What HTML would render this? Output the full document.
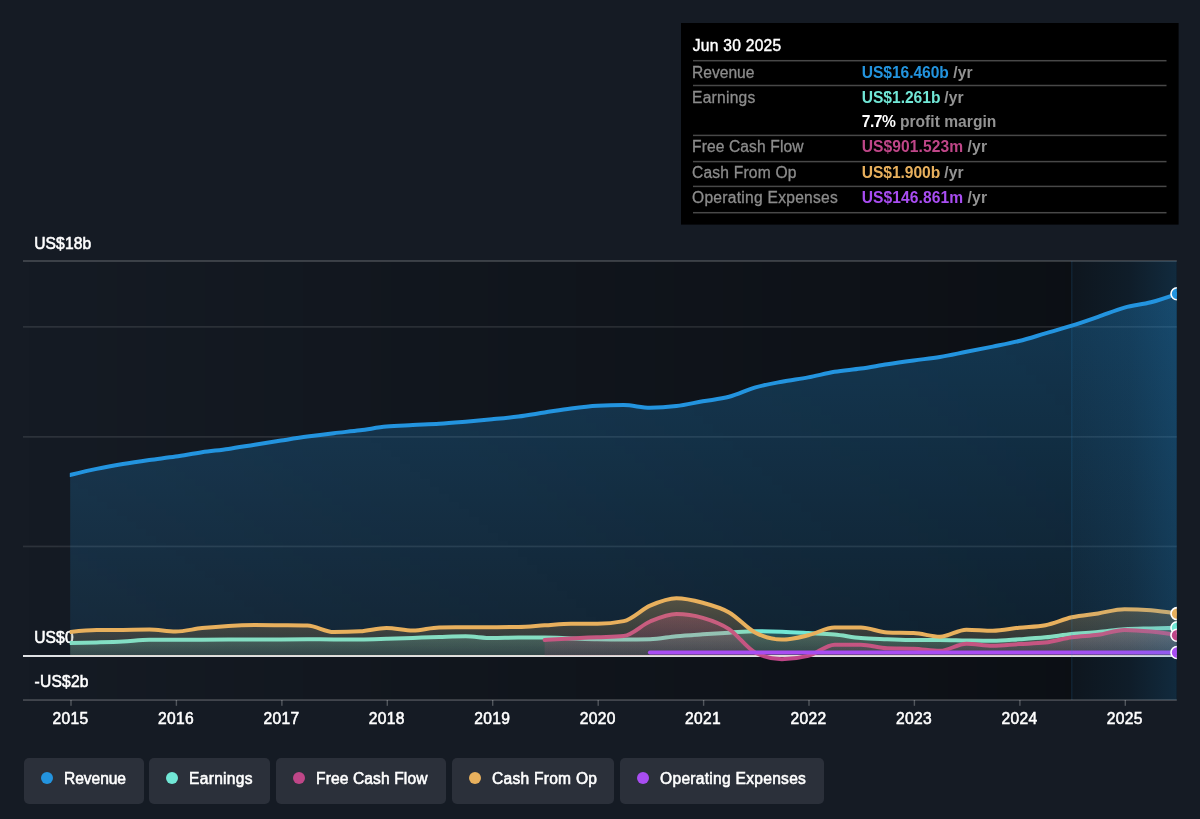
<!DOCTYPE html>
<html lang="en"><head><meta charset="utf-8"><title>Earnings and Revenue History</title>
<style>
html,body{margin:0;padding:0;}
body{width:1200px;height:819px;background:#151b24;overflow:hidden;position:relative;font-family:"Liberation Sans",sans-serif;}
svg.chart{position:absolute;left:0;top:0;will-change:transform;}
.ax{font-family:"Liberation Sans",sans-serif;font-size:15.6px;fill:#fff;font-weight:400;stroke:#fff;stroke-width:0.55px;}
.tx{font-family:"Liberation Sans",sans-serif;font-size:15.6px;}
.tw{fill:#fff;stroke:#fff;stroke-width:0.4px;}
.tk{fill:#8c8c8c;stroke:#8c8c8c;stroke-width:0.3px;}
.tv{font-weight:700;}
.tu{font-weight:700;fill:#939393;}
.lb{will-change:transform;position:absolute;top:757.5px;height:46.4px;background:#2b303a;border-radius:5px;box-sizing:border-box;}
.dot{position:absolute;left:17.2px;top:14.4px;width:12px;height:12px;border-radius:50%;}
.lt{position:absolute;left:40.1px;top:0;line-height:42px;font-size:15.6px;color:#fff;white-space:nowrap;-webkit-text-stroke:0.55px #fff;}
</style></head><body>
<svg class="chart" width="1200" height="819" viewBox="0 0 1200 819">
<defs>
<linearGradient id="bgd" x1="0" x2="1" y1="0" y2="0"><stop offset="0" stop-color="#000" stop-opacity="0"/><stop offset="1" stop-color="#000" stop-opacity="0.42"/></linearGradient>
<linearGradient id="hl" x1="0" x2="1" y1="0" y2="0"><stop offset="0" stop-color="#2394df" stop-opacity="0.035"/><stop offset="0.55" stop-color="#2394df" stop-opacity="0.09"/><stop offset="1" stop-color="#2394df" stop-opacity="0.195"/></linearGradient>
<linearGradient id="grev" x1="0" x2="0" y1="0" y2="1"><stop offset="0" stop-color="#2394df" stop-opacity="0.30"/><stop offset="1" stop-color="#2394df" stop-opacity="0.12"/></linearGradient>
<linearGradient id="gear" gradientUnits="userSpaceOnUse" x1="0" x2="0" y1="627" y2="656"><stop offset="0" stop-color="#71e7d6" stop-opacity="0.30"/><stop offset="1" stop-color="#71e7d6" stop-opacity="0.10"/></linearGradient>
<linearGradient id="gfcf" gradientUnits="userSpaceOnUse" x1="0" x2="0" y1="614" y2="659"><stop offset="0" stop-color="#bf4688" stop-opacity="0.30"/><stop offset="1" stop-color="#bf4688" stop-opacity="0.10"/></linearGradient>
<linearGradient id="gcfo" gradientUnits="userSpaceOnUse" x1="0" x2="0" y1="598" y2="656"><stop offset="0" stop-color="#e8b05d" stop-opacity="0.31"/><stop offset="1" stop-color="#e8b05d" stop-opacity="0.10"/></linearGradient>
<clipPath id="cp"><rect x="23" y="255" width="1153.8" height="450"/></clipPath>
<clipPath id="cps"><rect x="69.8" y="255" width="1107" height="450"/></clipPath>
</defs>
<rect x="24" y="261" width="1047" height="439" fill="url(#bgd)"/>
<rect x="1071" y="261" width="105.8" height="439" fill="#0d1117"/>
<rect x="23" y="260" width="1153.8" height="2" fill="#fff" fill-opacity="0.17"/>
<rect x="23" y="326.0" width="1153.8" height="1.7" fill="#fff" fill-opacity="0.10"/>
<rect x="23" y="436.0" width="1153.8" height="1.7" fill="#fff" fill-opacity="0.10"/>
<rect x="23" y="545.6" width="1153.8" height="1.7" fill="#fff" fill-opacity="0.10"/>
<text id="a18" x="34.2" y="248.6" class="ax" style="letter-spacing:0.122px">US$18b</text>
<text id="a0" x="34.2" y="643.4" class="ax" style="letter-spacing:0.122px">US$0</text>
<text id="am2" x="34.6" y="687.3" class="ax" style="letter-spacing:0.198px">-US$2b</text>
<g clip-path="url(#cp)">
<path d="M70.2,475.0C79.0,472.87 87.8,470.73 96.6,468.9C105.3,467.07 114.1,465.48 122.9,464.0C131.7,462.52 140.5,461.25 149.3,460.0C158.1,458.75 166.8,457.80 175.6,456.5C184.4,455.20 193.2,453.47 202.0,452.2C210.8,450.93 219.6,450.15 228.3,448.9C237.1,447.65 245.9,446.08 254.7,444.7C263.5,443.32 272.3,441.95 281.1,440.6C289.8,439.25 298.6,437.83 307.4,436.6C316.2,435.37 325.0,434.25 333.8,433.2C342.6,432.15 351.3,431.40 360.1,430.3C368.9,429.20 377.7,427.47 386.5,426.6C395.3,425.73 404.1,425.57 412.8,425.1C421.6,424.63 430.4,424.37 439.2,423.8C448.0,423.23 456.8,422.45 465.6,421.7C474.3,420.95 483.1,420.17 491.9,419.3C500.7,418.43 509.5,417.63 518.3,416.5C527.1,415.37 535.8,413.83 544.6,412.5C553.4,411.17 562.2,409.62 571.0,408.5C579.8,407.38 588.6,406.27 597.4,405.8C606.1,405.33 614.9,405.10 623.7,405.1C632.5,405.10 641.3,407.80 650.1,407.8C658.9,407.80 667.6,407.18 676.4,406.1C685.2,405.02 694.0,402.85 702.8,401.3C711.6,399.75 720.4,399.12 729.1,396.8C737.9,394.48 746.7,389.92 755.5,387.4C764.3,384.88 773.1,383.37 781.9,381.7C790.6,380.03 799.4,379.05 808.2,377.4C817.0,375.75 825.8,373.27 834.6,371.8C843.4,370.33 852.1,369.87 860.9,368.6C869.7,367.33 878.5,365.57 887.3,364.2C896.1,362.83 904.9,361.60 913.6,360.4C922.4,359.20 931.2,358.43 940.0,357.0C948.8,355.57 957.6,353.53 966.4,351.8C975.1,350.07 983.9,348.40 992.7,346.6C1001.5,344.80 1010.3,343.20 1019.1,341.0C1027.9,338.80 1036.6,335.95 1045.4,333.4C1054.2,330.85 1063.0,328.47 1071.8,325.7C1080.6,322.93 1089.4,319.82 1098.1,316.8C1106.9,313.78 1115.7,310.02 1124.5,307.6C1133.3,305.18 1142.1,304.60 1150.9,302.3C1159.6,300.00 1168.4,296.90 1177.2,293.8L1177.2,656.0L70.2,656.0Z" fill="url(#grev)" clip-path="url(#cps)"/>
<path d="M70.2,475.0C79.0,472.87 87.8,470.73 96.6,468.9C105.3,467.07 114.1,465.48 122.9,464.0C131.7,462.52 140.5,461.25 149.3,460.0C158.1,458.75 166.8,457.80 175.6,456.5C184.4,455.20 193.2,453.47 202.0,452.2C210.8,450.93 219.6,450.15 228.3,448.9C237.1,447.65 245.9,446.08 254.7,444.7C263.5,443.32 272.3,441.95 281.1,440.6C289.8,439.25 298.6,437.83 307.4,436.6C316.2,435.37 325.0,434.25 333.8,433.2C342.6,432.15 351.3,431.40 360.1,430.3C368.9,429.20 377.7,427.47 386.5,426.6C395.3,425.73 404.1,425.57 412.8,425.1C421.6,424.63 430.4,424.37 439.2,423.8C448.0,423.23 456.8,422.45 465.6,421.7C474.3,420.95 483.1,420.17 491.9,419.3C500.7,418.43 509.5,417.63 518.3,416.5C527.1,415.37 535.8,413.83 544.6,412.5C553.4,411.17 562.2,409.62 571.0,408.5C579.8,407.38 588.6,406.27 597.4,405.8C606.1,405.33 614.9,405.10 623.7,405.1C632.5,405.10 641.3,407.80 650.1,407.8C658.9,407.80 667.6,407.18 676.4,406.1C685.2,405.02 694.0,402.85 702.8,401.3C711.6,399.75 720.4,399.12 729.1,396.8C737.9,394.48 746.7,389.92 755.5,387.4C764.3,384.88 773.1,383.37 781.9,381.7C790.6,380.03 799.4,379.05 808.2,377.4C817.0,375.75 825.8,373.27 834.6,371.8C843.4,370.33 852.1,369.87 860.9,368.6C869.7,367.33 878.5,365.57 887.3,364.2C896.1,362.83 904.9,361.60 913.6,360.4C922.4,359.20 931.2,358.43 940.0,357.0C948.8,355.57 957.6,353.53 966.4,351.8C975.1,350.07 983.9,348.40 992.7,346.6C1001.5,344.80 1010.3,343.20 1019.1,341.0C1027.9,338.80 1036.6,335.95 1045.4,333.4C1054.2,330.85 1063.0,328.47 1071.8,325.7C1080.6,322.93 1089.4,319.82 1098.1,316.8C1106.9,313.78 1115.7,310.02 1124.5,307.6C1133.3,305.18 1142.1,304.60 1150.9,302.3C1159.6,300.00 1168.4,296.90 1177.2,293.8" fill="none" stroke="#2394df" stroke-width="4" stroke-linejoin="round" stroke-linecap="round" clip-path="url(#cps)"/>
<path d="M70.2,643.0C79.0,642.83 87.8,642.65 96.6,642.4C105.3,642.15 114.1,641.93 122.9,641.5C131.7,641.07 140.5,639.80 149.3,639.8C158.1,639.80 166.8,639.80 175.6,639.8C184.4,639.80 193.2,639.73 202.0,639.7C210.8,639.67 219.6,639.63 228.3,639.6C237.1,639.57 245.9,639.53 254.7,639.5C263.5,639.47 272.3,639.43 281.1,639.4C289.8,639.37 298.6,639.30 307.4,639.3C316.2,639.30 325.0,639.40 333.8,639.4C342.6,639.40 351.3,639.40 360.1,639.4C368.9,639.40 377.7,639.05 386.5,638.8C395.3,638.55 404.1,638.20 412.8,637.9C421.6,637.60 430.4,637.27 439.2,637.0C448.0,636.73 456.8,636.30 465.6,636.3C474.3,636.30 483.1,638.00 491.9,638.0C500.7,638.00 509.5,637.60 518.3,637.6C527.1,637.60 535.8,637.60 544.6,637.6C553.4,637.60 562.2,638.13 571.0,638.4C579.8,638.67 588.6,639.02 597.4,639.2C606.1,639.38 614.9,639.50 623.7,639.5C632.5,639.50 641.3,639.40 650.1,639.2C658.9,639.00 667.6,637.02 676.4,636.2C685.2,635.38 694.0,634.88 702.8,634.3C711.6,633.72 720.4,633.22 729.1,632.7C737.9,632.18 746.7,631.20 755.5,631.2C764.3,631.20 773.1,631.48 781.9,631.8C790.6,632.12 799.4,632.63 808.2,633.1C817.0,633.57 825.8,633.77 834.6,634.6C843.4,635.43 852.1,637.37 860.9,638.1C869.7,638.83 878.5,638.88 887.3,639.2C896.1,639.52 904.9,640.00 913.6,640.0C922.4,640.00 931.2,640.00 940.0,640.0C948.8,640.00 957.6,640.37 966.4,640.5C975.1,640.63 983.9,640.80 992.7,640.8C1001.5,640.80 1010.3,639.88 1019.1,639.3C1027.9,638.72 1036.6,638.18 1045.4,637.3C1054.2,636.42 1063.0,634.87 1071.8,634.0C1080.6,633.13 1089.4,632.90 1098.1,632.1C1106.9,631.30 1115.7,629.73 1124.5,629.2C1133.3,628.67 1142.1,628.63 1150.9,628.4C1159.6,628.17 1168.4,627.98 1177.2,627.8L1177.2,656.0L70.2,656.0Z" fill="url(#gear)" clip-path="url(#cps)"/>
<path d="M70.2,643.0C79.0,642.83 87.8,642.65 96.6,642.4C105.3,642.15 114.1,641.93 122.9,641.5C131.7,641.07 140.5,639.80 149.3,639.8C158.1,639.80 166.8,639.80 175.6,639.8C184.4,639.80 193.2,639.73 202.0,639.7C210.8,639.67 219.6,639.63 228.3,639.6C237.1,639.57 245.9,639.53 254.7,639.5C263.5,639.47 272.3,639.43 281.1,639.4C289.8,639.37 298.6,639.30 307.4,639.3C316.2,639.30 325.0,639.40 333.8,639.4C342.6,639.40 351.3,639.40 360.1,639.4C368.9,639.40 377.7,639.05 386.5,638.8C395.3,638.55 404.1,638.20 412.8,637.9C421.6,637.60 430.4,637.27 439.2,637.0C448.0,636.73 456.8,636.30 465.6,636.3C474.3,636.30 483.1,638.00 491.9,638.0C500.7,638.00 509.5,637.60 518.3,637.6C527.1,637.60 535.8,637.60 544.6,637.6C553.4,637.60 562.2,638.13 571.0,638.4C579.8,638.67 588.6,639.02 597.4,639.2C606.1,639.38 614.9,639.50 623.7,639.5C632.5,639.50 641.3,639.40 650.1,639.2C658.9,639.00 667.6,637.02 676.4,636.2C685.2,635.38 694.0,634.88 702.8,634.3C711.6,633.72 720.4,633.22 729.1,632.7C737.9,632.18 746.7,631.20 755.5,631.2C764.3,631.20 773.1,631.48 781.9,631.8C790.6,632.12 799.4,632.63 808.2,633.1C817.0,633.57 825.8,633.77 834.6,634.6C843.4,635.43 852.1,637.37 860.9,638.1C869.7,638.83 878.5,638.88 887.3,639.2C896.1,639.52 904.9,640.00 913.6,640.0C922.4,640.00 931.2,640.00 940.0,640.0C948.8,640.00 957.6,640.37 966.4,640.5C975.1,640.63 983.9,640.80 992.7,640.8C1001.5,640.80 1010.3,639.88 1019.1,639.3C1027.9,638.72 1036.6,638.18 1045.4,637.3C1054.2,636.42 1063.0,634.87 1071.8,634.0C1080.6,633.13 1089.4,632.90 1098.1,632.1C1106.9,631.30 1115.7,629.73 1124.5,629.2C1133.3,628.67 1142.1,628.63 1150.9,628.4C1159.6,628.17 1168.4,627.98 1177.2,627.8" fill="none" stroke="#71e7d6" stroke-width="4" stroke-linejoin="round" stroke-linecap="round" clip-path="url(#cps)"/>
<rect x="23" y="655" width="1153.8" height="2" fill="#dfe1e4"/>
<path d="M544.6,639.9C553.4,639.38 562.2,638.85 571.0,638.4C579.8,637.95 588.6,637.60 597.4,637.2C606.1,636.80 614.9,636.80 623.7,636.0C632.5,635.20 641.3,625.17 650.1,621.5C658.9,617.83 667.6,614.00 676.4,614.0C685.2,614.00 694.0,615.28 702.8,617.8C711.6,620.32 720.4,623.28 729.1,629.1C737.9,634.92 746.7,648.37 755.5,652.7C764.3,657.03 773.1,659.20 781.9,659.2C790.6,659.20 799.4,658.10 808.2,655.9C817.0,653.70 825.8,644.70 834.6,644.7C843.4,644.70 852.1,644.70 860.9,644.7C869.7,644.70 878.5,648.03 887.3,648.3C896.1,648.57 904.9,648.43 913.6,648.7C922.4,648.97 931.2,650.80 940.0,650.8C948.8,650.80 957.6,643.70 966.4,643.7C975.1,643.70 983.9,645.80 992.7,645.8C1001.5,645.80 1010.3,644.63 1019.1,644.1C1027.9,643.57 1036.6,643.60 1045.4,642.6C1054.2,641.60 1063.0,638.60 1071.8,637.3C1080.6,636.00 1089.4,636.02 1098.1,634.8C1106.9,633.58 1115.7,630.00 1124.5,630.0C1133.3,630.00 1142.1,630.73 1150.9,631.6C1159.6,632.47 1168.4,633.83 1177.2,635.2L1177.2,656.0L544.6,656.0Z" fill="url(#gfcf)" clip-path="url(#cps)"/>
<path d="M544.6,639.9C553.4,639.38 562.2,638.85 571.0,638.4C579.8,637.95 588.6,637.60 597.4,637.2C606.1,636.80 614.9,636.80 623.7,636.0C632.5,635.20 641.3,625.17 650.1,621.5C658.9,617.83 667.6,614.00 676.4,614.0C685.2,614.00 694.0,615.28 702.8,617.8C711.6,620.32 720.4,623.28 729.1,629.1C737.9,634.92 746.7,648.37 755.5,652.7C764.3,657.03 773.1,659.20 781.9,659.2C790.6,659.20 799.4,658.10 808.2,655.9C817.0,653.70 825.8,644.70 834.6,644.7C843.4,644.70 852.1,644.70 860.9,644.7C869.7,644.70 878.5,648.03 887.3,648.3C896.1,648.57 904.9,648.43 913.6,648.7C922.4,648.97 931.2,650.80 940.0,650.8C948.8,650.80 957.6,643.70 966.4,643.7C975.1,643.70 983.9,645.80 992.7,645.8C1001.5,645.80 1010.3,644.63 1019.1,644.1C1027.9,643.57 1036.6,643.60 1045.4,642.6C1054.2,641.60 1063.0,638.60 1071.8,637.3C1080.6,636.00 1089.4,636.02 1098.1,634.8C1106.9,633.58 1115.7,630.00 1124.5,630.0C1133.3,630.00 1142.1,630.73 1150.9,631.6C1159.6,632.47 1168.4,633.83 1177.2,635.2" fill="none" stroke="#bf4688" stroke-width="4" stroke-linejoin="round" stroke-linecap="round" clip-path="url(#cps)"/>
<path d="M70.2,632.0C79.0,631.12 87.8,630.23 96.6,630.1C105.3,629.97 114.1,629.98 122.9,629.9C131.7,629.82 140.5,629.60 149.3,629.6C158.1,629.60 166.8,631.50 175.6,631.5C184.4,631.50 193.2,629.03 202.0,628.1C210.8,627.17 219.6,626.40 228.3,625.9C237.1,625.40 245.9,625.10 254.7,625.1C263.5,625.10 272.3,625.22 281.1,625.3C289.8,625.38 298.6,625.40 307.4,625.6C316.2,625.80 325.0,632.10 333.8,632.1C342.6,632.10 351.3,631.83 360.1,631.3C368.9,630.77 377.7,628.00 386.5,628.0C395.3,628.00 404.1,630.50 412.8,630.5C421.6,630.50 430.4,627.47 439.2,627.4C448.0,627.33 456.8,627.33 465.6,627.3C474.3,627.27 483.1,627.27 491.9,627.2C500.7,627.13 509.5,627.10 518.3,626.9C527.1,626.70 535.8,625.83 544.6,625.3C553.4,624.77 562.2,623.70 571.0,623.7C579.8,623.70 588.6,623.70 597.4,623.7C606.1,623.70 614.9,622.83 623.7,621.1C632.5,619.37 641.3,609.50 650.1,605.7C658.9,601.90 667.6,598.30 676.4,598.3C685.2,598.30 694.0,600.45 702.8,602.8C711.6,605.15 720.4,607.42 729.1,612.4C737.9,617.38 746.7,628.17 755.5,632.7C764.3,637.23 773.1,639.60 781.9,639.6C790.6,639.60 799.4,637.32 808.2,635.3C817.0,633.28 825.8,627.50 834.6,627.5C843.4,627.50 852.1,627.50 860.9,627.5C869.7,627.50 878.5,632.17 887.3,632.5C896.1,632.83 904.9,632.67 913.6,633.0C922.4,633.33 931.2,636.70 940.0,636.7C948.8,636.70 957.6,629.70 966.4,629.7C975.1,629.70 983.9,630.80 992.7,630.8C1001.5,630.80 1010.3,628.63 1019.1,627.7C1027.9,626.77 1036.6,626.87 1045.4,625.2C1054.2,623.53 1063.0,619.27 1071.8,617.3C1080.6,615.33 1089.4,614.75 1098.1,613.4C1106.9,612.05 1115.7,609.20 1124.5,609.2C1133.3,609.20 1142.1,609.57 1150.9,610.3C1159.6,611.03 1168.4,612.32 1177.2,613.6L1177.2,656.0L70.2,656.0Z" fill="url(#gcfo)" clip-path="url(#cps)"/>
<path d="M70.2,632.0C79.0,631.12 87.8,630.23 96.6,630.1C105.3,629.97 114.1,629.98 122.9,629.9C131.7,629.82 140.5,629.60 149.3,629.6C158.1,629.60 166.8,631.50 175.6,631.5C184.4,631.50 193.2,629.03 202.0,628.1C210.8,627.17 219.6,626.40 228.3,625.9C237.1,625.40 245.9,625.10 254.7,625.1C263.5,625.10 272.3,625.22 281.1,625.3C289.8,625.38 298.6,625.40 307.4,625.6C316.2,625.80 325.0,632.10 333.8,632.1C342.6,632.10 351.3,631.83 360.1,631.3C368.9,630.77 377.7,628.00 386.5,628.0C395.3,628.00 404.1,630.50 412.8,630.5C421.6,630.50 430.4,627.47 439.2,627.4C448.0,627.33 456.8,627.33 465.6,627.3C474.3,627.27 483.1,627.27 491.9,627.2C500.7,627.13 509.5,627.10 518.3,626.9C527.1,626.70 535.8,625.83 544.6,625.3C553.4,624.77 562.2,623.70 571.0,623.7C579.8,623.70 588.6,623.70 597.4,623.7C606.1,623.70 614.9,622.83 623.7,621.1C632.5,619.37 641.3,609.50 650.1,605.7C658.9,601.90 667.6,598.30 676.4,598.3C685.2,598.30 694.0,600.45 702.8,602.8C711.6,605.15 720.4,607.42 729.1,612.4C737.9,617.38 746.7,628.17 755.5,632.7C764.3,637.23 773.1,639.60 781.9,639.6C790.6,639.60 799.4,637.32 808.2,635.3C817.0,633.28 825.8,627.50 834.6,627.5C843.4,627.50 852.1,627.50 860.9,627.5C869.7,627.50 878.5,632.17 887.3,632.5C896.1,632.83 904.9,632.67 913.6,633.0C922.4,633.33 931.2,636.70 940.0,636.7C948.8,636.70 957.6,629.70 966.4,629.7C975.1,629.70 983.9,630.80 992.7,630.8C1001.5,630.80 1010.3,628.63 1019.1,627.7C1027.9,626.77 1036.6,626.87 1045.4,625.2C1054.2,623.53 1063.0,619.27 1071.8,617.3C1080.6,615.33 1089.4,614.75 1098.1,613.4C1106.9,612.05 1115.7,609.20 1124.5,609.2C1133.3,609.20 1142.1,609.57 1150.9,610.3C1159.6,611.03 1168.4,612.32 1177.2,613.6" fill="none" stroke="#e8b05d" stroke-width="4" stroke-linejoin="round" stroke-linecap="round" clip-path="url(#cps)"/>
<path d="M650,652.5L1177,652.5" stroke="#a94df2" stroke-width="4.2" stroke-linecap="round" fill="none"/>
<rect x="1071" y="261" width="105.8" height="439" fill="url(#hl)"/>
<rect x="1071" y="261" width="1.6" height="439" fill="#2394df" fill-opacity="0.10"/>
<circle cx="1177" cy="293.8" r="6" fill="#2394df" stroke="#fff" stroke-width="1.6"/>
<circle cx="1177" cy="613.6" r="6" fill="#e8b05d" stroke="#fff" stroke-width="1.6"/>
<circle cx="1177" cy="627.8" r="6" fill="#71e7d6" stroke="#fff" stroke-width="1.6"/>
<circle cx="1177" cy="635.2" r="6" fill="#bf4688" stroke="#fff" stroke-width="1.6"/>
<circle cx="1177" cy="652.5" r="6" fill="#a94df2" stroke="#fff" stroke-width="1.6"/>
</g>
<rect x="23" y="699.1" width="1153.8" height="1.9" fill="#fff" fill-opacity="0.19"/>
<rect x="70.3" y="700" width="1.4" height="5.8" fill="#fff" fill-opacity="0.26"/>
<text id="y2015" x="70.5" y="724.2" class="ax" text-anchor="middle" style="letter-spacing:0.337px">2015</text>
<rect x="175.7" y="700" width="1.4" height="5.8" fill="#fff" fill-opacity="0.26"/>
<text id="y2016" x="175.9" y="724.2" class="ax" text-anchor="middle" style="letter-spacing:0.337px">2016</text>
<rect x="281.2" y="700" width="1.4" height="5.8" fill="#fff" fill-opacity="0.26"/>
<text id="y2017" x="281.4" y="724.2" class="ax" text-anchor="middle" style="letter-spacing:0.337px">2017</text>
<rect x="386.6" y="700" width="1.4" height="5.8" fill="#fff" fill-opacity="0.26"/>
<text id="y2018" x="386.8" y="724.2" class="ax" text-anchor="middle" style="letter-spacing:0.337px">2018</text>
<rect x="492.0" y="700" width="1.4" height="5.8" fill="#fff" fill-opacity="0.26"/>
<text id="y2019" x="492.2" y="724.2" class="ax" text-anchor="middle" style="letter-spacing:0.337px">2019</text>
<rect x="597.5" y="700" width="1.4" height="5.8" fill="#fff" fill-opacity="0.26"/>
<text id="y2020" x="597.7" y="724.2" class="ax" text-anchor="middle" style="letter-spacing:0.337px">2020</text>
<rect x="702.9" y="700" width="1.4" height="5.8" fill="#fff" fill-opacity="0.26"/>
<text id="y2021" x="703.1" y="724.2" class="ax" text-anchor="middle" style="letter-spacing:0.337px">2021</text>
<rect x="808.3" y="700" width="1.4" height="5.8" fill="#fff" fill-opacity="0.26"/>
<text id="y2022" x="808.5" y="724.2" class="ax" text-anchor="middle" style="letter-spacing:0.337px">2022</text>
<rect x="913.7" y="700" width="1.4" height="5.8" fill="#fff" fill-opacity="0.26"/>
<text id="y2023" x="913.9" y="724.2" class="ax" text-anchor="middle" style="letter-spacing:0.337px">2023</text>
<rect x="1019.2" y="700" width="1.4" height="5.8" fill="#fff" fill-opacity="0.26"/>
<text id="y2024" x="1019.4" y="724.2" class="ax" text-anchor="middle" style="letter-spacing:0.337px">2024</text>
<rect x="1124.6" y="700" width="1.4" height="5.8" fill="#fff" fill-opacity="0.26"/>
<text id="y2025" x="1124.8" y="724.2" class="ax" text-anchor="middle" style="letter-spacing:0.337px">2025</text>
</svg>
<svg class="chart" width="1200" height="819" viewBox="0 0 1200 819">
<rect x="681" y="23" width="497.6" height="201.6" fill="#000"/>
<rect x="693" y="59.95" width="473.5" height="1.5" fill="#484848"/>
<rect x="693" y="84.75" width="473.5" height="1.5" fill="#484848"/>
<rect x="693" y="134.65" width="473.5" height="1.5" fill="#484848"/>
<rect x="693" y="160.85" width="473.5" height="1.5" fill="#484848"/>
<rect x="693" y="185.65" width="473.5" height="1.5" fill="#484848"/>
<rect x="693" y="211.95" width="473.5" height="1.5" fill="#484848"/>
<text id="t0" class="tx tw" x="692.7" y="51" style="letter-spacing:0.269px">Jun 30 2025</text>
<text id="k0" class="tx tk" x="692" y="77.5" style="letter-spacing:0.005px">Revenue</text>
<text id="v0" class="tx tv" x="861.7" y="77.5" fill="#2394df" style="letter-spacing:-0.039px">US$16.460b</text>
<text id="u0" class="tx tu" x="953.2" y="77.5" style="letter-spacing:0.140px">/yr</text>
<text id="k1" class="tx tk" x="692" y="102.6" style="letter-spacing:0.249px">Earnings</text>
<text id="v1" class="tx tv" x="861.7" y="102.6" fill="#71e7d6" style="letter-spacing:-0.013px">US$1.261b</text>
<text id="u1" class="tx tu" x="944.2" y="102.6" style="letter-spacing:0.140px">/yr</text>
<text id="v2" class="tx tv" x="861.7" y="127.4" fill="#fff" style="letter-spacing:-0.483px">7.7%</text>
<text id="u2" class="tx tu" x="899.9" y="127.4" style="letter-spacing:0.024px">profit margin</text>
<text id="k3" class="tx tk" x="692" y="152.2" style="letter-spacing:0.111px">Free Cash Flow</text>
<text id="v3" class="tx tv" x="861.7" y="152.2" fill="#bf4688" style="letter-spacing:0.092px">US$901.523m</text>
<text id="u3" class="tx tu" x="967.6" y="152.2" style="letter-spacing:0.140px">/yr</text>
<text id="k4" class="tx tk" x="692" y="178.4" style="letter-spacing:0.201px">Cash From Op</text>
<text id="v4" class="tx tv" x="861.7" y="178.4" fill="#e8b05d" style="letter-spacing:-0.041px">US$1.900b</text>
<text id="u4" class="tx tu" x="944.2" y="178.4" style="letter-spacing:0.140px">/yr</text>
<text id="k5" class="tx tk" x="692" y="203.4" style="letter-spacing:0.266px">Operating Expenses</text>
<text id="v5" class="tx tv" x="861.7" y="203.4" fill="#a94df2" style="letter-spacing:0.090px">US$146.861m</text>
<text id="u5" class="tx tu" x="967.6" y="203.4" style="letter-spacing:0.140px">/yr</text>
</svg>
<div class="lb" style="left:23.6px;width:119.7px"><span class="dot" style="background:#2394df"></span><span class="lt" id="l0" style="letter-spacing:-0.090px">Revenue</span></div>
<div class="lb" style="left:149px;width:121.4px"><span class="dot" style="background:#71e7d6"></span><span class="lt" id="l1" style="letter-spacing:0.271px">Earnings</span></div>
<div class="lb" style="left:276.3px;width:169.5px"><span class="dot" style="background:#bf4688"></span><span class="lt" id="l2" style="letter-spacing:0.098px">Free Cash Flow</span></div>
<div class="lb" style="left:451.8px;width:162px"><span class="dot" style="background:#e8b05d"></span><span class="lt" id="l3" style="letter-spacing:0.238px">Cash From Op</span></div>
<div class="lb" style="left:619.8px;width:204.4px"><span class="dot" style="background:#a94df2"></span><span class="lt" id="l4" style="letter-spacing:0.265px">Operating Expenses</span></div>
</body></html>
